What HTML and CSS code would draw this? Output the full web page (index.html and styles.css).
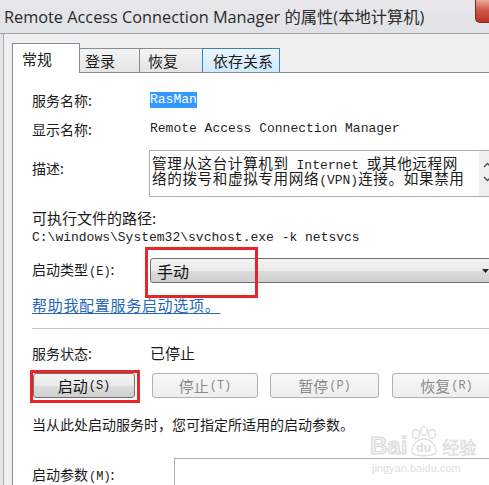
FILE: index.html
```html
<!DOCTYPE html>
<html>
<head>
<meta charset="utf-8">
<link rel="stylesheet" href="styles.css">
</head>
<body>
<div class="window">
  <div class="titlebar">
    <span class="title">Remote Access Connection Manager 的属性(本地计算机)</span>
    <span class="close"></span>
  </div>
  <div class="body">
    <div class="frame-left"></div>
    <div class="main">
      <div class="tabs">
        <div class="tab active">常规</div>
        <div class="tab t2">登录</div>
        <div class="tab t3">恢复</div>
        <div class="tab t4 hover">依存关系</div>
      </div>
      <div class="panel">
        <div class="row r1">
          <span class="label">服务名称:</span>
          <span class="mono sel">RasMan</span>
        </div>
        <div class="row r2">
          <span class="label">显示名称:</span>
          <span class="mono">Remote Access Connection Manager</span>
        </div>
        <div class="row r3">
          <span class="label label-top">描述:</span>
          <div class="textarea">
            <div class="ta-text">
              <div class="ta-line">管理从这台计算机到<span class="mono"> Internet </span>或其他远程网</div>
              <div class="ta-line">络的拨号和虚拟专用网络<span class="mono">(VPN)</span>连接。如果禁用</div>
            </div>
            <div class="scroll">
              <svg width="9" height="6" viewBox="0 0 9 6"><path d="M1 5 L4.5 1.5 L8 5" fill="none" stroke="#4d4d4d" stroke-width="1.4"/></svg>
              <svg width="9" height="6" viewBox="0 0 9 6"><path d="M1 1 L4.5 4.5 L8 1" fill="none" stroke="#4d4d4d" stroke-width="1.4"/></svg>
            </div>
          </div>
        </div>
        <div class="row r4"><span class="text15">可执行文件的路径:</span></div>
        <div class="row r5"><span class="mono path">C:\windows\System32\svchost.exe -k netsvcs</span></div>
        <div class="row r6">
          <span class="label">启动类型<span class="paren">(E)</span>:</span>
          <div class="combo">
            <span class="combo-text">手动</span>
            <svg class="arrow" width="7" height="4" viewBox="0 0 7 4"><path d="M0 0 H7 L3.5 4 Z" fill="#222"/></svg>
            <span class="redbox combo-box"></span>
          </div>
        </div>
        <div class="row r7"><span class="link">帮助我配置服务启动选项。</span></div>
        <div class="sep"></div>
        <div class="row r8">
          <span class="label">服务状态:</span>
          <span class="status">已停止</span>
        </div>
        <div class="row r9">
          <div class="btn b1">启动<span class="paren">(S)</span><span class="redbox btn-box"></span></div>
          <div class="btn b2 disabled">停止<span class="paren">(T)</span></div>
          <div class="btn b3 disabled">暂停<span class="paren">(P)</span></div>
          <div class="btn b4 disabled">恢复<span class="paren">(R)</span></div>
        </div>
        <div class="row r10"><span class="hint">当从此处启动服务时，您可指定所适用的启动参数。</span></div>
        <div class="row r11">
          <span class="label label-wide">启动参数<span class="paren">(M)</span>:</span>
          <div class="input"></div>
        </div>
      </div>
    </div>
  </div>
  <div class="watermark">
    <div class="wm-top">
      <span class="wm-bai">Bai</span>
      <span class="wm-paw">
        <svg width="34" height="32" viewBox="0 0 34 32">
          <ellipse cx="9" cy="8" rx="3.5" ry="4.5" fill="none" stroke="#dedede" stroke-width="1.3"/>
          <ellipse cx="17" cy="5" rx="3.5" ry="4.5" fill="none" stroke="#dedede" stroke-width="1.3"/>
          <ellipse cx="25" cy="8" rx="3.5" ry="4.5" fill="none" stroke="#dedede" stroke-width="1.3"/>
          <path d="M5 26 C5 17 12 13 17 13 C22 13 29 17 29 26 C29 31 5 31 5 26 Z" fill="none" stroke="#dedede" stroke-width="1.3"/>
        </svg>
        <span class="wm-du">du</span>
      </span>
      <span class="wm-jy">经验</span>
    </div>
    <div class="wm-url">jingyan.baidu.com</div>
  </div>
</div>
</body>
</html>
```
FILE: styles.css
```css
html, body {
  margin: 0;
  padding: 0;
}
body {
  width: 489px;
  height: 485px;
  overflow: hidden;
  background: #f0f0f0;
  font-family: "Noto Sans CJK SC", "Noto Sans", sans-serif;
  color: #1a1a1a;
}
.window {
  position: relative;
  width: 489px;
  height: 485px;
  overflow: hidden;
}
.titlebar {
  height: 33px;
  display: flex;
  align-items: flex-start;
  background: linear-gradient(#e9e7ea, #dfe2e7);
  border-bottom: 1px solid #a3a7ac;
}
.title {
  font-family: "Open Sans", "Noto Sans CJK SC", sans-serif;
  font-size: 16.3px;
  line-height: 20px;
  margin-top: 7px;
  margin-left: 4px;
  color: #2a2a2a;
  white-space: nowrap;
}
.close {
  margin-left: auto;
  width: 13px;
  height: 22px;
  flex: none;
  background: linear-gradient(#e8a99c, #cf5a48 45%, #b83323);
  border-left: 1px solid #7a2c22;
  border-bottom: 1px solid #7a2c22;
  border-radius: 0 0 0 5px;
}
.body {
  display: flex;
  height: 451px;
}
.frame-left {
  width: 12px;
  flex: none;
  background: linear-gradient(to right, #e3e4e6 0 3px, #a9abae 3px 4px, #f0f0f0 4px);
}
.main {
  flex: 1;
  min-width: 0;
  display: flex;
  flex-direction: column;
}
.tabs {
  height: 38px;
  flex: none;
  display: flex;
  align-items: flex-end;
}
.tab {
  box-sizing: border-box;
  height: 24px;
  border: 1px solid #898c95;
  border-bottom: none;
  background: linear-gradient(#f4f4f4, #e4e4e4);
  font-size: 15px;
  line-height: 20px;
  display: flex;
  align-items: center;
  margin-left: -1px;
  color: #1a1a1a;
}
.tab.active {
  position: relative;
  z-index: 1;
  height: 30px;
  width: 68px;
  margin-left: 0;
  margin-bottom: -1px;
  padding-left: 9px;
  background: #fff;
}
.tab.t2 { width: 61px; padding-left: 5px; }
.tab.t3 { width: 64px; padding-left: 8px; }
.tab.t4 { width: 78px; padding-left: 10px; }
.tab.hover {
  background: linear-gradient(#eaf6fd, #cfeafb);
  border-color: #3c7fb1;
}
.panel {
  flex: 1;
  background: #fff;
  border-top: 1px solid #898c95;
  border-left: 1px solid #898c95;
  padding-left: 19px;
  display: flex;
  flex-direction: column;
}
.row {
  display: flex;
  align-items: center;
  flex: none;
  white-space: nowrap;
}
.label {
  width: 118px;
  flex: none;
  font-size: 14px;
  line-height: 18px;
  color: #1a1a1a;
}
.label-top {
  align-self: flex-start;
  margin-top: 9px;
  width: 117px;
}
.label-wide { width: 142px; }
.paren {
  font-size: 12px;
  font-family: "Liberation Mono", monospace;
  margin-left: 1px;
}
.mono {
  font-family: "Liberation Mono", monospace;
  font-size: 13px;
  line-height: 16px;
  color: #1f1f1f;
}
.sel {
  background: #3399ff;
  color: #fff;
}
.r1 { margin-top: 18px; height: 18px; }
.r2 { margin-top: 11px; height: 18px; }
.r3 { margin-top: 12px; height: 47px; align-items: stretch; }
.r4 { margin-top: 12px; height: 18px; }
.r5 { margin-top: 3px; height: 16px; }
.r6 { margin-top: 12px; height: 25px; }
.r7 { margin-top: 13px; height: 18px; }
.r8 { margin-top: 15px; height: 18px; }
.r9 { margin-top: 11px; height: 25px; padding-left: 1px; }
.r10 { margin-top: 17px; height: 18px; }
.r11 { margin-top: 25px; height: 28px; }
.textarea {
  flex: none;
  width: 350px;
  box-sizing: border-box;
  border: 1px solid #abadb3;
  display: flex;
}
.ta-text {
  width: 327px;
  flex: none;
  padding-left: 2px;
  padding-top: 4px;
  font-size: 14.6px;
  letter-spacing: 0.6px;
  color: #1a1a1a;
}
.ta-line {
  height: 15px;
  line-height: 15px;
  display: flex;
  align-items: baseline;
}
.ta-text .mono {
  letter-spacing: 0;
  line-height: 15px;
  white-space: pre;
}
.scroll {
  width: 17px;
  flex: none;
  background: #f0f0f0;
  display: flex;
  flex-direction: column;
  align-items: center;
  gap: 8px;
  padding-top: 11px;
  box-sizing: border-box;
}
.text15 {
  font-size: 15px;
  line-height: 18px;
}
.path { color: #222; }
.combo {
  position: relative;
  flex: none;
  width: 345px;
  height: 25px;
  box-sizing: border-box;
  border: 1px solid #707070;
  border-radius: 3px;
  background: linear-gradient(#f2f2f2 0%, #ebebeb 50%, #dddddd 51%, #cfcfcf 100%);
  display: flex;
  align-items: center;
  padding-left: 6px;
  padding-right: 5px;
}
.combo-text {
  font-size: 16px;
  color: #111;
}
.arrow { margin-left: auto; }
.redbox {
  position: absolute;
  box-sizing: border-box;
  border: 3px solid #e8262a;
  pointer-events: none;
}
.combo-box {
  left: -6px;
  top: -12px;
  width: 113px;
  height: 51px;
}
.link {
  font-size: 15px;
  line-height: 18px;
  letter-spacing: 0.7px;
  color: #2366b8;
  text-decoration: underline;
  text-underline-offset: 2px;
}
.sep {
  margin-top: 14px;
  height: 1px;
  background: #c6c6c6;
  flex: none;
}
.status {
  font-size: 15px;
  line-height: 18px;
}
.btn {
  position: relative;
  box-sizing: border-box;
  height: 25px;
  border: 1px solid #707070;
  border-radius: 3px;
  background: linear-gradient(#f2f2f2 0%, #ebebeb 50%, #dddddd 51%, #cfcfcf 100%);
  display: flex;
  align-items: center;
  justify-content: center;
  font-size: 15px;
  color: #111;
  flex: none;
}
.btn.disabled {
  border-color: #adb2b5;
  background: linear-gradient(#f7f7f7, #eeeeee);
  color: #8a8a8a;
}
.b1 { width: 102px; }
.b2 { width: 106px; margin-left: 17px; }
.b3 { width: 109px; margin-left: 12px; }
.b4 { width: 109px; margin-left: 13px; }
.btn-box {
  left: -4px;
  top: -4px;
  width: 110px;
  height: 33px;
}
.hint {
  font-size: 14px;
  line-height: 18px;
}
.input {
  flex: none;
  width: 330px;
  height: 28px;
  box-sizing: border-box;
  border: 1px solid #abadb3;
  border-bottom: none;
  align-self: flex-start;
}
.r11 .label { margin-top: 6px; }
.watermark {
  position: absolute;
  left: 370px;
  top: 426px;
  color: #e2e2e2;
  font-family: "Liberation Sans", sans-serif;
}
.wm-top {
  display: flex;
  align-items: flex-end;
  height: 32px;
}
.wm-bai {
  font-size: 24px;
  line-height: 24px;
  font-weight: bold;
  color: #f0f0f0;
  -webkit-text-stroke: 1px #d9d9d9;
}
.wm-paw {
  position: relative;
  width: 34px;
  height: 32px;
}
.wm-paw svg { display: block; }
.wm-du {
  position: absolute;
  left: 9px;
  top: 15px;
  font-size: 12px;
  font-weight: bold;
  color: #dadada;
}
.wm-jy {
  font-family: "Noto Sans CJK SC", sans-serif;
  font-size: 17px;
  line-height: 22px;
  color: #efefef;
  -webkit-text-stroke: 0.6px #d9d9d9;
  margin-left: 1px;
}
.wm-url {
  font-size: 11px;
  line-height: 14px;
  color: #e0e0e0;
  margin-left: 2px;
  margin-top: 3px;
}
```
